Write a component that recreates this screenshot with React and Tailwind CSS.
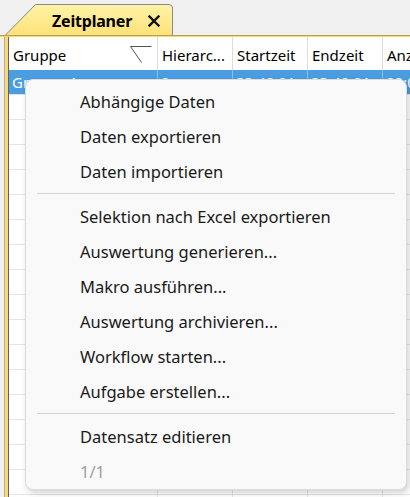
import React from "react";

const columns = [
  { title: "Gruppe", width: "w-[149px]", value: "Gruppe 1", sort: true },
  { title: "Hierarc...", width: "w-[75px]", value: "0" },
  { title: "Startzeit", width: "w-[75px]", value: "23:40:01" },
  { title: "Endzeit", width: "w-[75px]", value: "23:40:01" },
  { title: "Anzahl", width: "w-[75px]", value: "00:00" },
];

const menuGroups = [
  ["Abhängige Daten", "Daten exportieren", "Daten importieren"],
  [
    "Selektion nach Excel exportieren",
    "Auswertung generieren...",
    "Makro ausführen...",
    "Auswertung archivieren...",
    "Workflow starten...",
    "Aufgabe erstellen...",
  ],
  ["Datensatz editieren"],
];

function SortMark() {
  return (
    <svg width="22" height="18" viewBox="0 0 22 18" className="shrink-0">
      <path d="M0.5 0.5 H21.5 M0.5 0.5 L11.5 16.5" stroke="#505050" strokeWidth="1" fill="none" />
    </svg>
  );
}

function CloseMark() {
  return (
    <svg width="12" height="12" viewBox="0 0 12 12" className="shrink-0">
      <path d="M1.5 1.5 L10.5 10.5 M10.5 1.5 L1.5 10.5" stroke="#111" strokeWidth="2.4" strokeLinecap="square" />
    </svg>
  );
}

function Tab() {
  return (
    <div className="relative h-[31px] w-[168px] ml-[5px]">
      <svg className="absolute inset-0" width="168" height="31" viewBox="0 0 168 31">
        <defs>
          <linearGradient id="tabFill" x1="0" y1="0" x2="0" y2="1">
            <stop offset="0" stopColor="#fff3a8" />
            <stop offset="1" stopColor="#ffe17a" />
          </linearGradient>
        </defs>
        <path
          d="M0.5 31 L30.5 0.5 H164 Q167.5 0.5 167.5 4 V31"
          fill="url(#tabFill)"
          stroke="#8a8a8a"
          strokeWidth="1"
        />
      </svg>
      <div className="relative flex items-center h-full pl-[47px] pt-[2px] gap-[16px]">
        <span className="text-[16px] font-bold text-black leading-none tracking-[-0.2px]">Zeitplaner</span>
        <CloseMark />
      </div>
    </div>
  );
}

function Menu() {
  return (
    <div className="absolute left-[25px] top-[79px] w-[382px] h-[411px] rounded-[8px] bg-[#f9f9f9] border border-[#dcdcdc] shadow-[2px_3px_6px_rgba(0,0,0,0.18)] pt-[5px]">
      {menuGroups.map((group, gi) => (
        <div key={gi}>
          {gi > 0 && <div className="mx-[11px] mt-[3px] mb-[6px] h-px bg-[#d4d4d4]" />}
          {group.map((label) => (
            <div key={label} className="h-[35px] flex items-center pl-[54px] text-[16.5px] text-[#1a1a1a]">
              {label}
            </div>
          ))}
        </div>
      ))}
      <div className="h-[35px] flex items-center pl-[54px] text-[16.5px] text-[#a0a0a0]">1/1</div>
    </div>
  );
}

export default function App() {
  const rows = Array.from({ length: 17 });

  return (
    <div
      className="relative w-[410px] h-[497px] overflow-hidden bg-[#f0f0f0]"
      style={{ fontFamily: '"Segoe UI", "Noto Sans", sans-serif' }}
    >
      {/* Tab bar */}
      <div className="h-[35px] flex items-end pt-[4px]">
        <Tab />
      </div>
      <div className="h-[2px] bg-[#ffd966] border-t border-[#b0a060]" />

      {/* Grid panel */}
      <div className="flex h-[460px] ml-[4px]">
        <div className="w-[1px] bg-[#a8a8c8]" />
        <div className="w-[3px] bg-[#ffd966]" />
        <div className="w-[1px] bg-[#606060]" />
        <div className="flex-1 bg-white overflow-hidden">
          {/* Header */}
          <div className="flex h-[33px] text-[15px] text-black">
            {columns.map((c) => (
              <div
                key={c.title}
                className={`${c.width} shrink-0 flex items-center justify-between pl-[4px] pr-[4px] border-r border-[#dcdcdc] whitespace-nowrap overflow-hidden`}
              >
                <span className="pt-[4px]">{c.title}</span>
                {c.sort && (
                  <span className="self-start mt-[9px] mr-[1px]">
                    <SortMark />
                  </span>
                )}
              </div>
            ))}
          </div>

          {/* Selected row */}
          <div className="flex h-[24px] bg-[#4a9de0] text-[15px] text-white">
            {columns.map((c) => (
              <div
                key={c.title}
                className={`${c.width} shrink-0 flex items-center pl-[3px] border-r border-[#8cc0ea] whitespace-nowrap overflow-hidden`}
              >
                {c.value}
              </div>
            ))}
          </div>

          {/* Empty rows */}
          {rows.map((_, i) => (
            <div key={i} className="flex h-[25px] border-t border-[#e4e4e4]">
              {columns.map((c) => (
                <div key={c.title} className={`${c.width} shrink-0 border-r border-[#e4e4e4]`} />
              ))}
            </div>
          ))}
        </div>
      </div>

      <Menu />
    </div>
  );
}
